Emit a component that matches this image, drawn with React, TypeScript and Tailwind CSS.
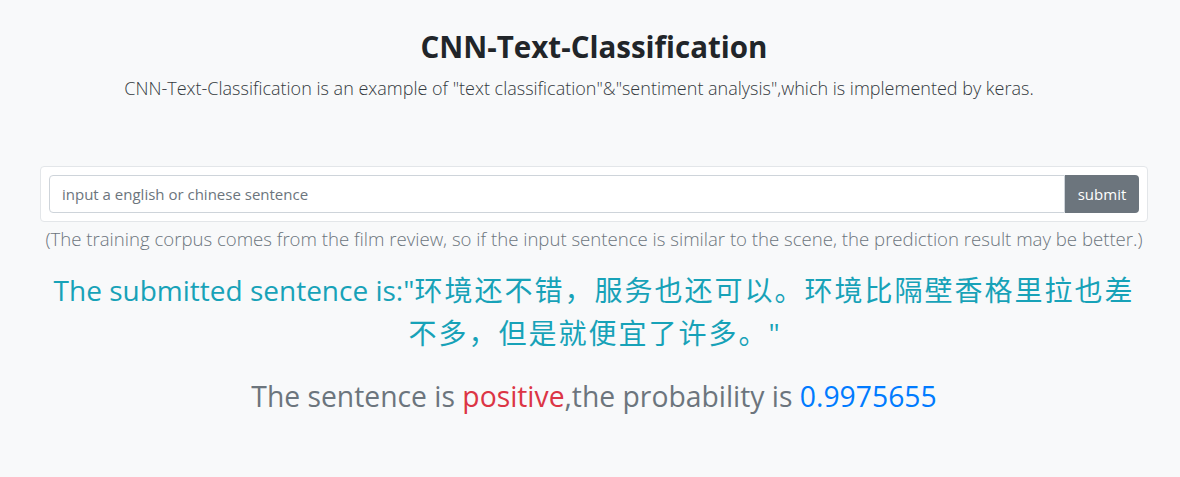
export default function App() {
  return (
    <div
      className="min-h-screen bg-[#f8f9fa] text-[#212529]"
      style={{ fontFamily: '"Open Sans", "Noto Sans CJK SC", sans-serif' }}
    >
      <div className="ml-[40px] w-[1108px] flex flex-col items-center pt-[28px]">
        <h1 className="text-[29.5px] font-bold leading-[38px]">CNN-Text-Classification</h1>
        <p className="mt-[9px] mr-[30px] text-[18px] font-light text-[#343a40] leading-[26px]">
          CNN-Text-Classification is an example of "text classification"&amp;"sentiment analysis",which is implemented by keras.
        </p>

        <div className="mt-[65px] w-full rounded border border-[#e3e6e9] bg-white p-2">
          <div className="flex">
            <input
              type="text"
              placeholder="input a english or chinese sentence"
              className="h-[38px] flex-1 rounded-l border border-[#ced4da] px-3 text-[15px] text-[#495057] placeholder:text-[#6c757d] outline-none"
            />
            <button className="h-[38px] w-[74px] rounded-r bg-[#6c757d] text-[15px] text-white">
              submit
            </button>
          </div>
        </div>
        <p className="mt-[4px] text-[18.6px] font-light text-[#6c757d] leading-[26px]">
          (The training corpus comes from the film review, so if the input sentence is similar to the scene, the prediction result may be better.)
        </p>

        <h3 className="mt-[17px] w-full px-[4px] text-center text-[28px] leading-[43px] text-[#17a2b8]">
          The submitted sentence is:"<span className="tracking-[2px]">环境还不错，服务也还可以。环境比隔壁香格里拉也差不多，但是就便宜了许多。</span>"
        </h3>

        <h3 className="mt-[20px] text-[28.3px] leading-[42px] text-[#6c757d]">
          The sentence is <span className="text-[#dc3545]">positive</span>,the probability is{" "}
          <span className="text-[#007bff]">0.9975655</span>
        </h3>
      </div>
    </div>
  );
}
